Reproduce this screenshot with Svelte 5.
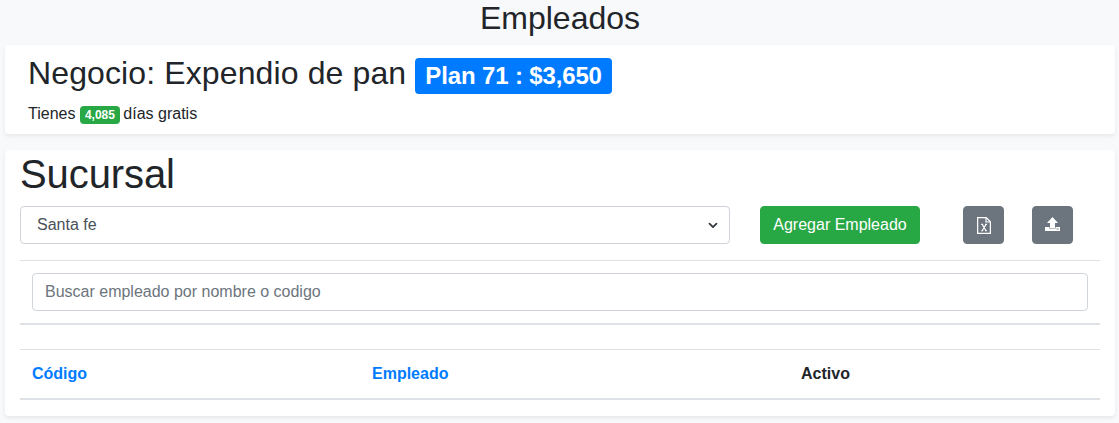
<script lang="ts">
  const columns = [
    { label: 'Código', link: true },
    { label: 'Empleado', link: true },
    { label: 'Activo', link: false }
  ];
</script>

<main class="page">
  <h2 class="page-title">Empleados</h2>

  <section class="card card--plan">
    <div class="plan-head">
      <h2 class="plan-name">Negocio: Expendio de pan</h2>
      <span class="badge badge--plan">Plan 71 : $3,650</span>
    </div>
    <p class="trial">Tienes <span class="badge badge--days">4,085</span> días gratis</p>
  </section>

  <section class="card card--branch">
    <h1 class="branch-title">Sucursal</h1>

    <div class="toolbar">
      <div class="select">
        <span>Santa fe</span>
        <svg class="select__caret" width="10" height="7" viewBox="0 0 10 7" aria-hidden="true">
          <path d="M1.5 1.6 5 5.1 8.5 1.6" fill="none" stroke="#343a40" stroke-width="1.8" stroke-linecap="round" stroke-linejoin="round" />
        </svg>
      </div>
      <button class="btn btn--add" type="button">Agregar Empleado</button>
      <button class="btn btn--icon btn--excel" type="button" aria-label="Exportar">
        <svg width="14" height="17" viewBox="0 0 14 17" aria-hidden="true">
          <path d="M.6.6h8.6l4.2 4.2v11.6H.6z" fill="none" stroke="#fff" stroke-width="1.3" />
          <path d="M9 .8v4.2h4.2" fill="none" stroke="#fff" stroke-width="1.2" />
          <path d="M4.2 7.4h2M8 7.4h2M4.2 13.8h2M8 13.8h2M5.2 7.4l3.8 6.4M9 7.4l-3.8 6.4" fill="none" stroke="#fff" stroke-width="1.1" />
        </svg>
      </button>
      <button class="btn btn--icon btn--upload" type="button" aria-label="Importar">
        <svg class="upload-icon" width="15" height="14" viewBox="0 0 15 14" aria-hidden="true">
          <path d="M7.5 0 13 6H10v5H5V6H2z" fill="#fff" />
          <path d="M0 10h4.4v1.6h6.2V10H15v4H0z" fill="#fff" />
          <path d="M11.4 12h2.4" stroke="#6c757d" stroke-width=".8" />
        </svg>
      </button>
    </div>

    <hr class="rule" />

    <div class="search">
      <input class="search__input" type="text" placeholder="Buscar empleado por nombre o codigo" />
    </div>

    <div class="search-end"></div>

    <table class="table">
      <thead>
        <tr>
          {#each columns as col}
            <th class:th--link={col.link}>{col.label}</th>
          {/each}
        </tr>
      </thead>
    </table>
  </section>
</main>

<style>
  :global(body) {
    margin: 0;
    background: #f8f9fa;
    color: #212529;
    font-family: "Liberation Sans", Arial, sans-serif;
    font-size: 16px;
    line-height: 1.5;
  }

  .page {
    padding: 0 4px 0 5px;
    height: 423px;
    box-sizing: border-box;
    overflow: hidden;
  }

  .page-title {
    margin: 0 0 9px;
    font-size: 32px;
    font-weight: 500;
    line-height: 36px;
    text-align: center;
  }

  .card {
    background: #fff;
    border-radius: 4px;
    box-shadow: 0 2px 4px rgba(0, 0, 0, 0.075);
    box-sizing: border-box;
  }

  .card--plan {
    height: 89px;
    padding: 10px 23px 0;
    margin-bottom: 16px;
  }

  .plan-head {
    display: flex;
    align-items: baseline;
    gap: 9px;
  }

  .plan-name {
    margin: 0;
    font-size: 32px;
    font-weight: 500;
    line-height: 36px;
    letter-spacing: 0.12px;
  }

  .badge {
    display: inline-block;
    border-radius: 4px;
    color: #fff;
    font-weight: 700;
    text-align: center;
    white-space: nowrap;
  }

  .badge--plan {
    background: #007bff;
    font-size: 24px;
    line-height: 24px;
    padding: 6px 10px;
    letter-spacing: -0.14px;
  }

  .badge--days {
    background: #28a745;
    font-size: 12px;
    line-height: 12px;
    padding: 3px 5px;
    margin-right: -1px;
    vertical-align: baseline;
  }

  .trial {
    margin: 8px 0 0;
    line-height: 24px;
  }

  .card--branch {
    height: 266px;
    padding: 0 15px;
  }

  .branch-title {
    margin: 0;
    font-size: 40px;
    font-weight: 500;
    line-height: 48px;
    padding-bottom: 8px;
    letter-spacing: -0.1px;
  }

  .toolbar {
    display: flex;
    align-items: stretch;
    height: 38px;
  }

  .select {
    display: flex;
    align-items: center;
    justify-content: space-between;
    width: 710px;
    box-sizing: border-box;
    padding: 0 11px 0 16px;
    border: 1px solid #ced4da;
    border-radius: 4px;
    color: #495057;
  }

  .btn {
    border: 1px solid transparent;
    border-radius: 4px;
    color: #fff;
    font: inherit;
    padding: 0;
    display: flex;
    align-items: center;
    justify-content: center;
  }

  .btn--add {
    width: 160px;
    margin-left: 30px;
    background: #28a745;
    border-color: #28a745;
  }

  .btn--icon {
    width: 41px;
    background: #6c757d;
    border-color: #6c757d;
  }

  .btn--excel {
    margin-left: 43px;
  }

  .btn--upload {
    margin-left: 28px;
  }

  .upload-icon {
    margin-bottom: 2px;
  }

  .rule {
    margin: 16px 0 12px;
    border: 0;
    border-top: 1px solid #dee2e6;
  }

  .search {
    padding: 0 12px;
  }

  .search__input {
    display: block;
    width: 100%;
    height: 38px;
    box-sizing: border-box;
    padding: 6px 12px;
    border: 1px solid #ced4da;
    border-radius: 4px;
    color: #495057;
    font: inherit;
    outline: none;
  }

  .search__input::placeholder {
    color: #6c757d;
    opacity: 1;
  }

  .search-end {
    margin-top: 12px;
    border-top: 2px solid #dee2e6;
  }

  .table {
    width: 100%;
    margin-top: 24px;
    border-collapse: collapse;
    table-layout: fixed;
  }

  .table th {
    box-sizing: border-box;
    padding: 12px;
    border-top: 1px solid #dee2e6;
    border-bottom: 2px solid #dee2e6;
    text-align: left;
    font-weight: 700;
    color: #212529;
  }

  .table th:nth-child(1) {
    width: 340px;
  }

  .table th:nth-child(2) {
    width: 429px;
  }

  .table .th--link {
    color: #007bff;
  }
</style>
